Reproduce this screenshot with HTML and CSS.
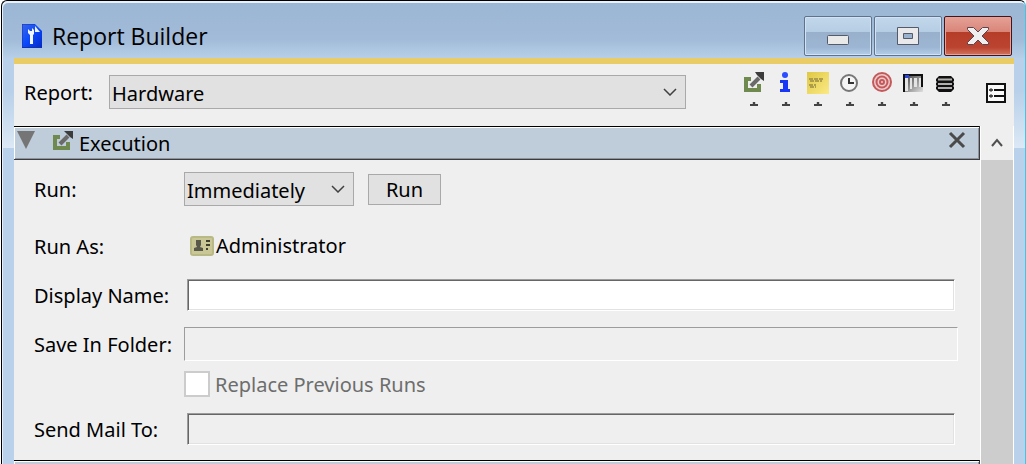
FILE: index.html
```
<!DOCTYPE html>
<html lang="en">
<head>
    <meta charset="UTF-8">
    <meta name="viewport" content="width=device-width, initial-scale=1.0">
    <title>Report Builder</title>
    <link rel="stylesheet" href="styles.css">
</head>
<body>
    <div class="window">
        <header class="title-bar">
            <svg class="title-icon" width="20" height="24" viewBox="0 0 20 24" aria-hidden="true">
                <defs>
                    <linearGradient id="docBlue" x1="0" y1="0" x2="1" y2="1">
                        <stop offset="0" stop-color="#3a66e8"/>
                        <stop offset="0.5" stop-color="#0a49fb"/>
                        <stop offset="1" stop-color="#0428c4"/>
                    </linearGradient>
                </defs>
                <path d="M0 0h13l7 7v17H0z" fill="url(#docBlue)"/>
                <path d="M0 0h13M0 0v24M0 23.500h20" stroke="#1233a8" fill="none"/>
                <path d="M13 2l5 6h-5z" fill="#eef3ff"/>
                <path d="M6 5l2 2h2V4l2 2v4l-1 1v9H8v-9L6 9z" fill="#f4f6ff"/>
            </svg>
            <h1 class="title">Report Builder</h1>
            <div class="window-buttons">
                <button class="window-button" type="button" aria-label="Minimize">
                    <svg width="24" height="26" viewBox="0 0 24 26"><rect x="1.500" y="12.500" width="21" height="9" rx="1" fill="#e9e9e9" stroke="#555a68"/></svg>
                </button>
                <button class="window-button" type="button" aria-label="Maximize">
                    <svg width="24" height="26" viewBox="0 0 24 26"><path fill-rule="evenodd" d="M1.500 4.500h21v17h-21zM7.500 10.500v5h9v-5z" fill="#e9e9ec" stroke="#555a68"/></svg>
                </button>
                <button class="window-button close" type="button" aria-label="Close">
                    <svg width="24" height="26" viewBox="0 0 24 26"><path d="M1.500 4.500h6l4.500 4.500 4.500-4.500h6v2L16 13l6.500 6.500v2h-6L12 17l-4.500 4.500h-6v-2L8 13 1.500 6.500z" fill="#efefef" stroke="#5b4650"/></svg>
                </button>
            </div>
        </header>

        <main class="content">
            <div class="report-bar">
                <label class="report-label" for="report">Report:</label>
                <div class="select-box report-select">
                    <select id="report">
                        <option>Hardware</option>
                    </select>
                    <svg class="chevron" width="14" height="8" viewBox="0 0 14 8"><path d="M1 1l6 6 6-6"/></svg>
                </div>
                <div class="toolbar">
                    <button class="tool" type="button" aria-label="Execution">
                        <svg width="22" height="22" viewBox="0 0 22 22">
                            <path d="M1 5h7v4H5v7h9v-4h4v8H1z" fill="#70894f"/>
                            <path d="M8 14l8-8" stroke="#6a6a6a" stroke-width="4"/>
                            <path d="M12 0h9v9l-3-2-4-4z" fill="#3c3c3c"/>
                        </svg>
                        <span class="tool-arrow"></span>
                    </button>
                    <button class="tool" type="button" aria-label="Information">
                        <svg width="22" height="22" viewBox="0 0 22 22">
                            <circle cx="10" cy="3" r="3" fill="#2b4cff"/>
                            <path d="M5 8h8v9h2v3H5v-3h3v-6H5z" fill="#1736f5"/>
                        </svg>
                        <span class="tool-arrow"></span>
                    </button>
                    <button class="tool" type="button" aria-label="Notes">
                        <svg width="22" height="22" viewBox="0 0 22 22">
                            <defs>
                                <linearGradient id="noteYellow" x1="0" y1="0" x2="1" y2="1">
                                    <stop offset="0" stop-color="#dfc843"/>
                                    <stop offset="1" stop-color="#fbea85"/>
                                </linearGradient>
                            </defs>
                            <path d="M0 0h22v22H0z" fill="url(#noteYellow)"/>
                            <path d="M2 7h14M3 9h12M2 13h7M3 15h6" stroke="#9a8c45" stroke-width="1.500" stroke-dasharray="4 1"/>
                        </svg>
                        <span class="tool-arrow"></span>
                    </button>
                    <button class="tool" type="button" aria-label="Schedule">
                        <svg width="22" height="22" viewBox="0 0 22 22">
                            <circle cx="10" cy="11" r="8" fill="#f5f5f5" stroke="#777" stroke-width="2"/>
                            <path d="M10 6v5h5" fill="none" stroke="#333" stroke-width="2"/>
                        </svg>
                        <span class="tool-arrow"></span>
                    </button>
                    <button class="tool" type="button" aria-label="Target">
                        <svg width="22" height="22" viewBox="0 0 22 22">
                            <g fill="none" stroke="#c4595b" stroke-width="2">
                                <circle cx="11" cy="10" r="9" fill="#eecaca"/>
                                <circle cx="11" cy="10" r="5.500"/>
                                <circle cx="11" cy="10" r="2"/>
                            </g>
                        </svg>
                        <span class="tool-arrow"></span>
                    </button>
                    <button class="tool" type="button" aria-label="Columns">
                        <svg width="22" height="22" viewBox="0 0 22 22">
                            <defs>
                                <linearGradient id="columnFade" x1="0" y1="0" x2="1" y2="1">
                                    <stop offset="0" stop-color="#333"/>
                                    <stop offset="1" stop-color="#e0e0e0"/>
                                </linearGradient>
                            </defs>
                            <path d="M0 2h20v18H0z" fill="url(#columnFade)"/>
                            <path d="M2 6h3v13H2zM7 6h2v11H7zM11 6h3v9h-3zM16 6h2v9h-2z" fill="#e4e4e4"/>
                            <path d="M1 20V3h18v12" fill="none" stroke="#111" stroke-width="2"/>
                            <path d="M2 3h4v3H2z" fill="#2745e8"/>
                        </svg>
                        <span class="tool-arrow"></span>
                    </button>
                    <button class="tool" type="button" aria-label="Database">
                        <svg width="22" height="22" viewBox="0 0 22 22">
                            <path d="M4 4h12l3 3v2l-1 1 1 1v2l-1 1 1 1v2l-3 3H4l-3-3v-2l1-1-1-1v-2l1-1-1-1V7z" fill="#111"/>
                            <path d="M3 7.500h14M3 12h14M3 16h14" stroke="#b5b0b0" stroke-width="2"/>
                        </svg>
                        <span class="tool-arrow"></span>
                    </button>
                </div>
                <button class="list-button" type="button" aria-label="Show list">
                    <svg width="20" height="20" viewBox="0 0 20 20">
                        <path d="M1 1h18v18H1z" fill="#fafafa" stroke="#111" stroke-width="2"/>
                        <path d="M8 7h10M8 13h10" stroke="#111" stroke-width="2"/>
                        <path d="M3 7h4M3 13h4" stroke="#555" stroke-width="2"/>
                        <path d="M5 5v4M5 11v4" stroke="#333"/>
                    </svg>
                </button>
            </div>

            <div class="scroll-area">
                <div class="sections">
                    <section>
                        <div class="section-header">
                            <svg width="18" height="18" viewBox="0 0 18 18" aria-hidden="true"><path d="M0 0h18L9 18z" fill="#757575"/></svg>
                            <svg class="section-icon" width="22" height="22" viewBox="0 0 22 22" aria-hidden="true">
                                <path d="M1 4h7v4H5v7h9v-4h4v8H1z" fill="#70894f"/>
                                <path d="M8 13l8-8" stroke="#6a6a6a" stroke-width="4"/>
                                <path d="M12 0h9v8l-3-2-4-4z" fill="#3c3c3c"/>
                            </svg>
                            <h2 class="section-title">Execution</h2>
                            <button class="section-close" type="button" aria-label="Remove section">
                                <svg width="18" height="18" viewBox="0 0 18 18"><path d="M2 2l14 14M16 2L2 16" stroke="#4a4a4a" stroke-width="3"/></svg>
                            </button>
                        </div>
                        <form class="form">
                            <div class="row">
                                <label class="row-label" for="run">Run:</label>
                                <div class="select-box run-select">
                                    <select id="run">
                                        <option>Immediately</option>
                                    </select>
                                    <svg class="chevron" width="14" height="8" viewBox="0 0 14 8"><path d="M1 1l6 6 6-6"/></svg>
                                </div>
                                <button class="run-button" type="button">Run</button>
                            </div>
                            <div class="row run-as">
                                <span class="row-label">Run As:</span>
                                <svg class="user-icon" width="24" height="20" viewBox="0 0 24 20" aria-hidden="true">
                                    <rect x="1" y="1" width="22" height="18" rx="2" fill="#c9c795" stroke="#b9b985" stroke-width="2"/>
                                    <path d="M6 4h5v5l-1 2 3 1v3H4v-3l3-1-1-2z" fill="#57574a"/>
                                    <path d="M16 5h4M16 9h4M16 13h2" stroke="#3e3e30" stroke-width="2"/>
                                </svg>
                                <span>Administrator</span>
                            </div>
                            <div class="row">
                                <label class="row-label" for="displayName">Display Name:</label>
                                <input class="text-box" type="text" id="displayName">
                            </div>
                            <div class="row">
                                <label class="row-label" for="folder">Save In Folder:</label>
                                <input class="folder-box" type="text" id="folder" readonly>
                            </div>
                            <div class="row check-row">
                                <input type="checkbox" id="replace" disabled>
                                <label for="replace">Replace Previous Runs</label>
                            </div>
                            <div class="row">
                                <label class="row-label" for="mail">Send Mail To:</label>
                                <input class="text-box" type="text" id="mail" disabled>
                            </div>
                        </form>
                    </section>
                    <section>
                        <div class="section-header"></div>
                    </section>
                </div>
                <div class="scrollbar">
                    <button class="scroll-up" type="button" aria-label="Scroll up">
                        <svg width="12" height="10" viewBox="0 0 12 10"><path d="M1 8l5-6 5 6" fill="none" stroke="#505050" stroke-width="2"/></svg>
                    </button>
                    <div class="scroll-thumb"></div>
                </div>
            </div>
        </main>
    </div>
</body>
</html>
```
FILE: styles.css
```
* {
    box-sizing: border-box;
}

body {
    margin: 0;
    height: 100vh;
    overflow: hidden;
    background-color: #fff;
    font-family: "Noto Sans", Tahoma, sans-serif;
    font-size: 20px;
    line-height: 24px;
    color: #000;
}

button, input, select {
    font: inherit;
    color: inherit;
    border-radius: 0;
}

button {
    padding: 0;
    border: none;
    background: none;
}

svg {
    display: block;
    flex: none;
}

h1, h2 {
    margin: 0;
    font-weight: normal;
}

/* Window frame */
.window {
    display: flex;
    flex-direction: column;
    height: 100%;
    margin-left: 1px;
    padding: 0 11px 0 12px;
    border: solid #000;
    border-width: 1px 1px 0;
    border-right-color: #45c4e0;
    border-radius: 6px 6px 0 0;
    box-shadow: inset 1px 2px 0 #e8f1fa;
    background: linear-gradient(#9bb6d4 0, #a1bbd8 38px, #b8d0e9 58px, #b8d0e9 90px, #dce8f5 147px, #b9d1ea 147px);
}

.title-bar {
    display: flex;
    align-items: center;
    flex: none;
    height: 57px;
    padding: 12px 2px 0 8px;
}

.title {
    flex: 1;
    margin-left: 10px;
    font-family: "Open Sans", "Segoe UI", sans-serif;
    font-size: 23px;
    line-height: 32px;
}

.window-buttons {
    display: flex;
    gap: 2px;
}

.window-button {
    display: flex;
    align-items: center;
    justify-content: center;
    width: 68px;
    height: 40px;
    border: 1px solid #5d7390;
    border-radius: 2px;
    box-shadow: inset 0 0 0 1px #d4e3f1;
    background: linear-gradient(#c2d7ea 0, #b5cde4 40%, #98b0cc 40%, #9db6d3 80%, #b4cde8);
}

.window-button.close {
    border-color: #46131b;
    box-shadow: inset 0 0 0 1px #e0a49c;
    background: linear-gradient(#e5a196 0, #d98478 40%, #b53d28 40%, #bb4430 80%, #d2745c);
}

.content {
    display: flex;
    flex-direction: column;
    flex: 1;
    min-height: 0;
    border-top: 6px solid #e9cc65;
    background-color: #efefef;
}

/* Report picker and toolbar */
.report-bar {
    display: flex;
    align-items: flex-start;
    flex: none;
    height: 62px;
    padding: 8px 2px 0 10px;
}

.report-label {
    width: 85px;
    margin-top: 9px;
}

.select-box {
    position: relative;
    height: 34px;
}

.select-box select {
    width: 100%;
    height: 100%;
    padding: 3px 30px 0 2px;
    border: 1px solid #a9a9a9;
    background-color: #e1e1e1;
    appearance: none;
}

.chevron {
    position: absolute;
    top: 13px;
    right: 9px;
    fill: none;
    stroke: #404040;
    stroke-width: 1.5;
    pointer-events: none;
}

.report-select {
    flex: 1;
    margin-top: 3px;
}

.toolbar {
    display: flex;
    margin-left: 52px;
}

.tool {
    display: flex;
    flex-direction: column;
    align-items: center;
    gap: 8px;
    width: 32px;
}

.tool-arrow {
    width: 8px;
    height: 4px;
    background-color: #444;
    clip-path: polygon(35% 0, 65% 0, 65% 50%, 100% 50%, 100% 100%, 0 100%, 0 50%, 35% 50%);
}

.list-button {
    display: flex;
    justify-content: center;
    width: 32px;
    margin: 11px 0 0 18px;
}

/* Sections */
.scroll-area {
    display: flex;
    flex: 1;
    min-height: 0;
}

.sections {
    flex: 1;
    min-width: 0;
    overflow: hidden;
}

.section-header {
    display: flex;
    align-items: flex-start;
    height: 34px;
    padding: 4px 13px 0 3px;
    border: solid #3c3c40;
    border-width: 1px 1px 1px 0;
    border-top-color: #000;
    box-shadow: inset 1px 1px 0 #fff, inset -1px -1px 0 #8c949c;
    background-color: #bfccda;
}

.section-icon {
    margin-left: 17px;
}

.section-title {
    flex: 1;
    margin-left: 5px;
    font-size: 20px;
    line-height: 26px;
}

/* Form */
.form {
    padding: 12px 22px 14px 20px;
}

.row {
    display: flex;
    align-items: center;
    min-height: 34px;
    margin-bottom: 15px;
}

.row:first-child {
    margin-bottom: 23px;
}

.row:last-child {
    margin-bottom: 0;
}

.row-label {
    flex: none;
    width: 150px;
    padding-top: 2px;
}

.run-select {
    width: 170px;
}

.run-button {
    width: 73px;
    height: 31px;
    margin-left: 14px;
    padding-top: 2px;
    border: 1px solid #a9a9a9;
    background-color: #e1e1e1;
}

.user-icon {
    margin: 0 2px 0 6px;
}

.text-box {
    flex: 1;
    min-width: 0;
    height: 32px;
    margin: 0 3px;
    border: 1px solid #9c9c9c;
    border-right-color: #fff;
    border-bottom-color: #fff;
    box-shadow: inset 1px 1px 0 #666, inset -1px -1px 0 #e2e2e2;
    background-color: #fff;
}

.text-box:disabled {
    background-color: #efefef;
}

.folder-box {
    flex: 1;
    min-width: 0;
    height: 34px;
    border: 1px solid #9c9c9c;
    border-right-color: #fff;
    border-bottom-color: #fff;
    background-color: #efefef;
}

.check-row {
    gap: 5px;
    min-height: 26px;
    margin-top: -5px;
    padding-left: 150px;
    color: #6d6d6d;
}

.check-row label {
    padding-top: 2px;
}

.check-row input {
    width: 26px;
    height: 26px;
    margin: 0;
    border: 2px solid #ccc;
    background-color: #fff;
    appearance: none;
}

/* Scrollbar */
.scrollbar {
    display: flex;
    flex-direction: column;
    width: 34px;
    border: solid #fff;
    border-width: 0 1px;
}

.scroll-up {
    display: flex;
    align-items: center;
    justify-content: center;
    height: 34px;
}

.scroll-thumb {
    flex: 1;
    background-color: #cdcdcd;
}
```
